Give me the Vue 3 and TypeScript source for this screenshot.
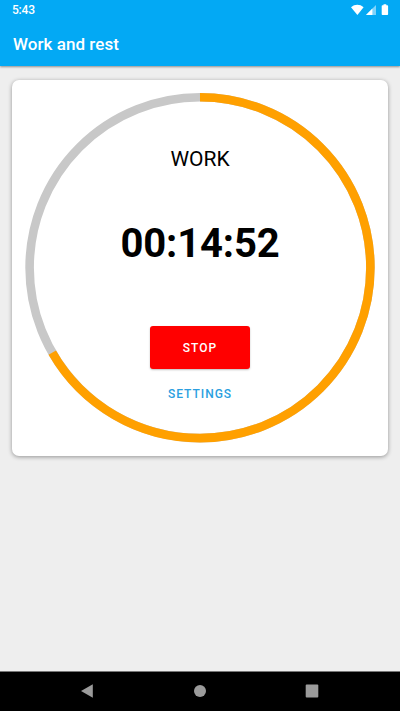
<script setup lang="ts">
import { computed, ref } from 'vue'

const phase = ref('WORK')
const secondsLeft = ref(892)
const progress = ref(2 / 3)

const radius = 170.4
const circumference = 2 * Math.PI * radius
const dash = computed(() => `${circumference * progress.value} ${circumference}`)

const clock = computed(() => {
  const s = secondsLeft.value
  return [Math.floor(s / 3600), Math.floor(s / 60) % 60, s % 60]
    .map((n) => String(n).padStart(2, '0'))
    .join(':')
})
</script>

<template>
  <div class="screen">
    <header class="top">
      <div class="status">
        <span class="time">5:43</span>
        <svg class="indicators" width="38" height="12" viewBox="0 0 38 12">
          <path d="M0 3.2 C3.6 -0.1 9 -0.1 12.6 3.2 L6.4 11 Z" fill="#fff" />
          <path d="M25 1 V11 H15 Z" fill="#7fd3fb" />
          <path d="M21.4 4.6 V11 H15 Z" fill="#fff" />
          <path d="M32.5 0.3 h2.8 v1 h1 q0.8 0 0.8 0.8 v8.2 q0 0.8 -0.8 0.8 h-4.8 q-0.8 0 -0.8 -0.8 v-8.2 q0 -0.8 0.8 -0.8 h1 z" fill="#fff" />
        </svg>
      </div>
      <h1 class="title">Work and rest</h1>
    </header>

    <main class="content">
      <section class="card">
        <svg class="ring" viewBox="0 0 376 376">
          <circle cx="188" cy="187.7" :r="radius" stroke="#c8c8c8" />
          <circle
            cx="188"
            cy="187.7"
            :r="radius"
            stroke="#ffa000"
            :stroke-dasharray="dash"
            transform="rotate(-90 188 187.7)"
          />
        </svg>
        <div class="inner">
          <div class="phase">{{ phase }}</div>
          <div class="clock">{{ clock }}</div>
          <button class="stop" type="button">STOP</button>
          <button class="settings" type="button">SETTINGS</button>
        </div>
      </section>
    </main>

    <nav class="navbar">
      <svg width="14" height="14" viewBox="0 0 14 14"><path d="M1 7 L12.8 0.2 V13.8 Z" /></svg>
      <svg width="14" height="14" viewBox="0 0 14 14"><circle cx="7" cy="7" r="6" /></svg>
      <svg width="14" height="14" viewBox="0 0 14 14"><rect x="0.7" y="0.5" width="12.6" height="13" rx="1" /></svg>
    </nav>
  </div>
</template>

<style>
body {
  margin: 0;
}
</style>

<style scoped>
.screen {
  display: flex;
  flex-direction: column;
  width: 400px;
  height: 711px;
  background: #eee;
  font-family: Roboto, "Liberation Sans", sans-serif;
  overflow: hidden;
}
.top {
  height: 66px;
  flex: none;
  background: #03a9f4;
  color: #fff;
  box-shadow: 0 1px 2px rgba(0, 0, 0, 0.4);
}
.status {
  display: flex;
  justify-content: space-between;
  height: 20px;
  padding: 0 11px 0 12px;
}
.time {
  font-size: 12px;
  font-weight: 500;
  letter-spacing: -0.2px;
  line-height: 21px;
}
.indicators {
  margin-top: 4px;
}
.title {
  margin: 0;
  padding: 12px 13px 0;
  font-size: 17px;
  font-weight: 500;
  letter-spacing: 0.05px;
  line-height: 24px;
}
.content {
  flex: 1;
  padding: 14px 12px 0;
}
.card {
  display: grid;
  height: 376px;
  border-radius: 7px;
  background: #fff;
  box-shadow: 0 1px 4px rgba(0, 0, 0, 0.38);
}
.ring,
.inner {
  grid-area: 1 / 1;
}
.ring {
  width: 376px;
  height: 376px;
  fill: none;
  stroke-width: 8.6px;
}
.inner {
  display: flex;
  flex-direction: column;
  align-items: center;
  padding-top: 67px;
  color: #000;
}
.phase {
  font-size: 21px;
  line-height: 24px;
}
.clock {
  margin-top: 49px;
  font-size: 40px;
  font-weight: 700;
  letter-spacing: -0.15px;
  line-height: 48px;
}
.stop,
.settings {
  border: 0;
  padding: 0;
  font-family: inherit;
  font-size: 12px;
  font-weight: 500;
  letter-spacing: 1px;
}
.stop {
  width: 100px;
  height: 43px;
  margin-top: 58px;
  border-radius: 3px;
  background: #f00;
  color: #fff;
  box-shadow: 0 1px 2px rgba(0, 0, 0, 0.25);
}
.settings {
  height: 24px;
  margin-top: 13px;
  background: none;
  color: #2b9fe0;
}
.navbar {
  display: flex;
  flex: none;
  align-items: center;
  justify-content: space-between;
  box-sizing: border-box;
  height: 40px;
  padding: 0 81px 1px 80px;
  border-top: 1px solid #777;
  background: #000;
  fill: #9b9b9b;
}
</style>
